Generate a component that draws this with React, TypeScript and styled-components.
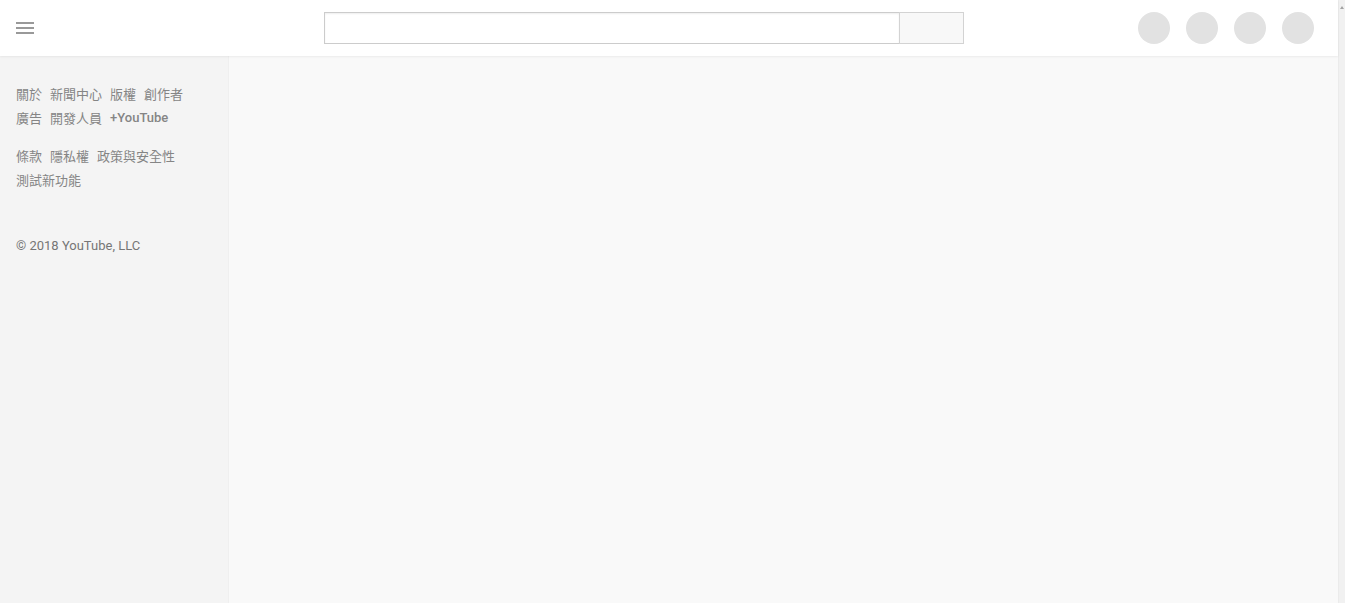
import React from "react";
import styled, { createGlobalStyle } from "styled-components";

const Global = createGlobalStyle`
  html, body { margin: 0; padding: 0; height: 100%; overflow: hidden; }
  body { font-family: Roboto, "Noto Sans CJK TC", Arial, sans-serif; background: #fafafa; }
  #root { height: 100%; }
`;

const Shell = styled.div`
  display: flex;
  width: 1345px;
  height: 603px;
`;

const Page = styled.div`
  flex: 1;
  display: flex;
  flex-direction: column;
  min-width: 0;
`;

const ScrollStrip = styled.div`
  width: 7px;
  background: #f1f1f1;
  border-left: 1px solid #ebebeb;
  box-sizing: border-box;
  display: flex;
  justify-content: center;
  padding-top: 6px;
`;

const Arrow = styled.div`
  width: 0;
  height: 0;
  border-left: 2px solid transparent;
  border-right: 2px solid transparent;
  border-bottom: 3px solid #a3a3a3;
`;

const Masthead = styled.header`
  height: 56px;
  flex: none;
  background: #ffffff;
  display: flex;
  align-items: center;
  padding: 0 24px 0 16px;
  box-sizing: border-box;
  box-shadow: 0 1px 2px rgba(0, 0, 0, 0.06);
  position: relative;
  z-index: 1;
`;

const Burger = styled.div`
  width: 18px;
  display: flex;
  flex-direction: column;
  gap: 3px;
  flex: none;
`;

const BurgerLine = styled.span`
  display: block;
  height: 2px;
  background: #999999;
`;

const SearchWrap = styled.div`
  display: flex;
  margin-left: 290px;
  height: 32px;
`;

const SearchInput = styled.div`
  width: 575px;
  height: 32px;
  box-sizing: border-box;
  border: 1px solid #cccccc;
  border-right: none;
  background: #fff;
  box-shadow: inset 0 1px 2px #eee;
`;

const SearchButton = styled.div`
  width: 65px;
  height: 32px;
  box-sizing: border-box;
  border: 1px solid #d3d3d3;
  background: #f8f8f8;
`;

const Icons = styled.div`
  margin-left: auto;
  display: flex;
  gap: 16px;
`;

const Dot = styled.span`
  width: 32px;
  height: 32px;
  border-radius: 50%;
  background: #e2e2e2;
  display: block;
`;

const Body = styled.div`
  flex: 1;
  display: flex;
  min-height: 0;
`;

const Sidebar = styled.aside`
  width: 229px;
  flex: none;
  background: #f4f4f4;
  border-right: 1px solid #efefef;
  box-sizing: border-box;
  padding: 25px 16px 0 16px;
`;

const Section = styled.div<{ $gap?: number }>`
  margin-bottom: ${(p) => p.$gap ?? 0}px;
`;

const LinkRow = styled.div`
  display: flex;
  flex-wrap: wrap;
  height: 24px;
  align-items: center;
`;

const Link = styled.span<{ $bold?: boolean }>`
  font-size: 13px;
  color: #858585;
  margin-right: 8px;
  font-weight: ${(p) => (p.$bold ? 500 : 400)};
  white-space: nowrap;
`;

const Copy = styled.div`
  font-size: 13px;
  color: #767676;
  height: 24px;
  display: flex;
  align-items: center;
`;

const Main = styled.main`
  flex: 1;
  background: #f9f9f9;
`;

export default function App() {
  return (
    <>
      <Global />
      <Shell>
        <Page>
          <Masthead>
            <Burger>
              <BurgerLine />
              <BurgerLine />
              <BurgerLine />
            </Burger>
            <SearchWrap>
              <SearchInput />
              <SearchButton />
            </SearchWrap>
            <Icons>
              <Dot />
              <Dot />
              <Dot />
              <Dot />
            </Icons>
          </Masthead>
          <Body>
            <Sidebar>
              <Section $gap={14}>
                <LinkRow>
                  <Link>關於</Link>
                  <Link>新聞中心</Link>
                  <Link>版權</Link>
                  <Link>創作者</Link>
                </LinkRow>
                <LinkRow>
                  <Link>廣告</Link>
                  <Link>開發人員</Link>
                  <Link $bold>+YouTube</Link>
                </LinkRow>
              </Section>
              <Section $gap={42}>
                <LinkRow>
                  <Link>條款</Link>
                  <Link>隱私權</Link>
                  <Link>政策與安全性</Link>
                </LinkRow>
                <LinkRow>
                  <Link>測試新功能</Link>
                </LinkRow>
              </Section>
              <Copy>© 2018 YouTube, LLC</Copy>
            </Sidebar>
            <Main />
          </Body>
        </Page>
        <ScrollStrip>
          <Arrow />
        </ScrollStrip>
      </Shell>
    </>
  );
}
